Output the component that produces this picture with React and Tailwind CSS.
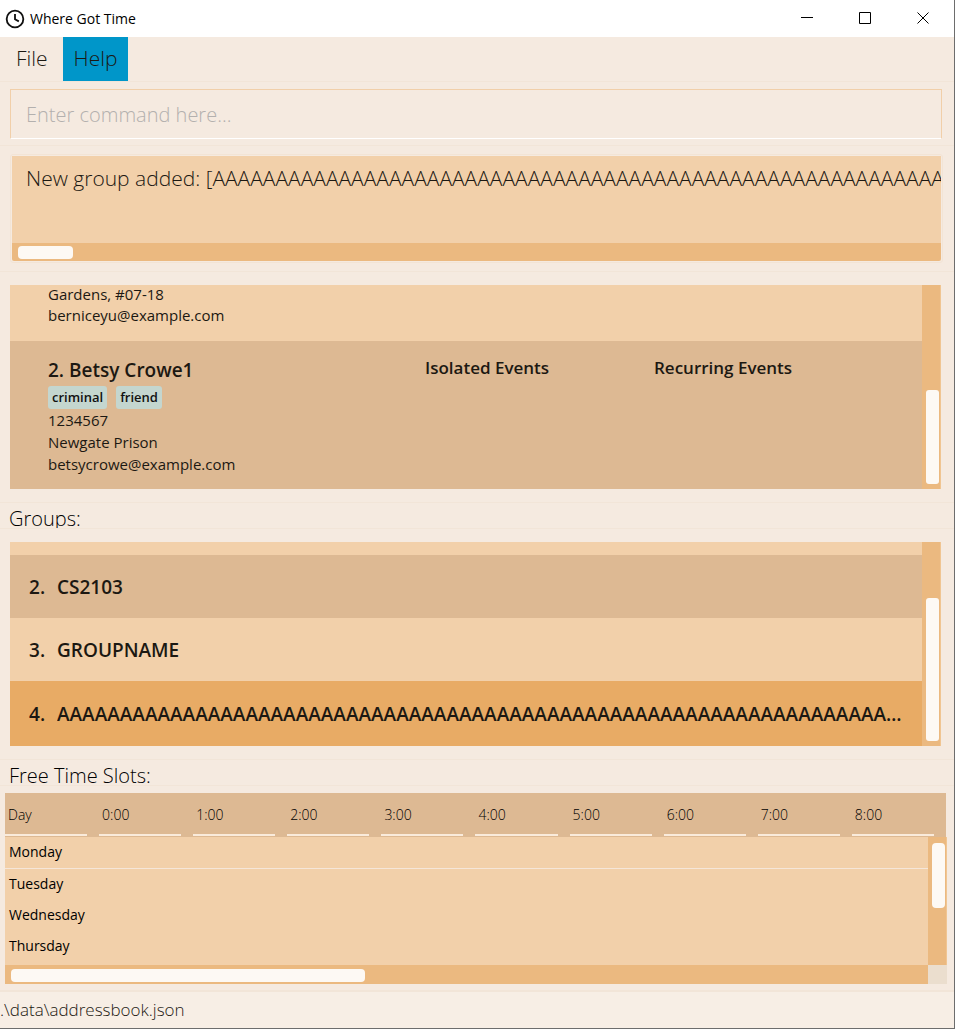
import React from "react";

const LONG_NAME = "A".repeat(80);
const HOURS = ["0:00", "1:00", "2:00", "3:00", "4:00", "5:00", "6:00", "7:00", "8:00"];
const DAYS = ["Monday", "Tuesday", "Wednesday", "Thursday"];

const GROUPS = [
  { id: 2, name: "CS2103", row: "h-[63px] bg-[#ddb993]" },
  { id: 3, name: "GROUPNAME", row: "h-[63px] bg-[#f2d0aa]" },
  { id: 4, name: LONG_NAME, row: "h-[65px] bg-[#e8ab65]" },
];

function TitleBar() {
  return (
    <header className="flex h-[37px] shrink-0 items-center bg-white pr-[2px] pl-[5px]">
      <svg className="size-5" viewBox="0 0 24 24" fill="none" stroke="#111" strokeWidth="2.2" aria-hidden="true">
        <circle cx="12" cy="12" r="10" />
        <path d="M12 6v6.3l4.6 2.6" />
      </svg>
      <h1 className="ml-[5px] grow text-sm text-black">Where Got Time</h1>
      <div className="flex h-full">
        <button aria-label="Minimize" className="flex w-[58px] items-center justify-center">
          <svg width="13" height="13" viewBox="0 0 13 13" stroke="#000" aria-hidden="true">
            <path d="M0 5.5h12" />
          </svg>
        </button>
        <button aria-label="Maximize" className="flex w-[58px] items-center justify-center">
          <svg width="13" height="13" viewBox="0 0 13 13" fill="none" stroke="#000" aria-hidden="true">
            <path d="M.5 .5h11v11H.5z" />
          </svg>
        </button>
        <button aria-label="Close" className="flex w-[58px] items-center justify-center">
          <svg width="13" height="13" viewBox="0 0 13 13" fill="none" stroke="#000" aria-hidden="true">
            <path d="M.5 .5l11 11M11.5 .5l-11 11" />
          </svg>
        </button>
      </div>
    </header>
  );
}

function SideScroll({ thumb }) {
  return (
    <div className="flex w-[19px] shrink-0 flex-col justify-end border-r border-[#f0c592] bg-[#ebb980] pt-1 pr-px pb-[5px] pl-1">
      <div className={"rounded-[3px] bg-[#fdf9f4] " + thumb} />
    </div>
  );
}

function Tag({ children }) {
  return (
    <span className="rounded-[3px] bg-[#c4d6cf] px-1 text-[13px] leading-[23px] font-semibold text-[#111]">
      {children}
    </span>
  );
}

function SectionLabel({ children }) {
  return (
    <h2 className="h-[26px] shrink-0 overflow-hidden border-b border-[#f2e5d8] pl-[9px] text-[20px] leading-8 font-light text-black">
      {children}
    </h2>
  );
}

export default function App() {
  return (
    <div className="flex min-h-screen flex-col border-r border-b border-[#6d6d6d] bg-[#f5eae0] font-['Open_Sans','Noto_Sans',sans-serif] text-[#1c1812]">
      <TitleBar />

      <nav className="flex h-11 shrink-0 text-[21px] leading-[42px] font-light">
        <button className="ml-[6px] flex px-[10px]">File</button>
        <button className="ml-[5px] flex bg-[#0096c9] px-[11px]">Help</button>
      </nav>

      <section className="border-y border-[#f2e5d8] pt-[7px] pr-3 pb-[6px] pl-[10px]">
        <input
          aria-label="Command"
          placeholder="Enter command here..."
          className="block h-[50px] w-full border border-b-white border-[#f1cfa9] bg-transparent px-[15px] text-[20px] font-light outline-none placeholder:text-[#b3b0ae]"
        />
      </section>

      <section className="border-b border-[#f2e5d8] pt-2 pr-[11px] pb-2 pl-[10px]">
        <div className="rounded-[3px] border border-[#f3e4d5] p-px">
          <textarea
            aria-label="Result"
            readOnly
            wrap="off"
            value={"New group added: [" + LONG_NAME}
            className="block h-[87px] w-full resize-none overflow-hidden bg-[#f2d0aa] px-[14px] pt-2 text-[21px] leading-7 font-light outline-none"
          />
          <div className="h-[18px] rounded-b-[2px] bg-[#ebb980] px-[6px] pt-[3px]">
            <div className="h-[13px] w-[55px] rounded-[4px] bg-[#fdf9f4]" />
          </div>
        </div>
      </section>

      <section className="flex grow border-b border-[#f2e5d8] pt-[13px] pr-[13px] pb-[13px] pl-[10px]">
        <div className="flex h-[204px] grow flex-col justify-end overflow-hidden bg-[#f2d0aa] text-[15px]">
          <article className="px-[38px] pb-[15px] leading-[21px]">
            <p>Gardens, #07-18</p>
            <p>berniceyu@example.com</p>
          </article>
          <article className="grid h-[148px] shrink-0 grid-cols-[377px_229px_1fr] bg-[#ddb993] pt-[15px] pl-[38px]">
            <div className="leading-[22px]">
              <h2 className="text-[19px] leading-7 font-semibold">2. Betsy Crowe1</h2>
              <div className="mt-[2px] flex gap-[9px]">
                <Tag>criminal</Tag>
                <Tag>friend</Tag>
              </div>
              <p>1234567</p>
              <p>Newgate Prison</p>
              <p>betsycrowe@example.com</p>
            </div>
            <h3 className="text-[17px] leading-6 font-semibold">Isolated Events</h3>
            <h3 className="text-[17px] leading-6 font-semibold">Recurring Events</h3>
          </article>
        </div>
        <SideScroll thumb="h-[94px]" />
      </section>

      <SectionLabel>Groups:</SectionLabel>

      <section className="flex border-b border-[#f2e5d8] pt-[13px] pr-[13px] pb-[13px] pl-[10px]">
        <ol className="flex h-[204px] min-w-0 grow flex-col justify-end overflow-hidden bg-[#f2d0aa] text-[19px] font-semibold">
          {GROUPS.map((g) => (
            <li key={g.id} className={"flex shrink-0 items-center pt-[2px] pr-4 pl-[19px] " + g.row}>
              <span className="w-7 shrink-0">{g.id}.</span>
              <span className="truncate">{g.name}</span>
            </li>
          ))}
        </ol>
        <SideScroll thumb="h-[143px]" />
      </section>

      <SectionLabel>Free Time Slots:</SectionLabel>

      <section className="border-b-2 border-[#f2e5d8] pt-[7px] pr-[7px] pb-[6px] pl-[5px]">
        <div className="relative">
          <div className="mr-px h-[172px] overflow-hidden bg-[#f2d0aa]">
            <table className="w-full table-fixed border-separate border-spacing-0 text-left text-sm">
              <thead className="bg-[#ddb993]">
                <tr>
                  {["Day", ...HOURS].map((h) => (
                    <th key={h} className="p-0 pb-px font-light text-black">
                      <div className="mr-3 h-[43px] border-b-2 border-[#faebdb] pl-[3px] leading-[43px]">{h}</div>
                    </th>
                  ))}
                </tr>
              </thead>
              <tbody>
                {DAYS.map((d, i) => (
                  <tr key={d} className={i === 0 ? "h-8 *:border-b *:border-[#f5e6d9]" : "h-[31px]"}>
                    <td className="p-0 pb-px pl-1 text-black">{d}</td>
                    {HOURS.map((h) => (
                      <td key={h} className="p-0" />
                    ))}
                  </tr>
                ))}
              </tbody>
            </table>
          </div>
          <div className="flex h-[19px] bg-[#ebdece]">
            <div className="mr-[19px] grow bg-[#ebb980] px-[6px] pt-1">
              <div className="h-[13px] w-[354px] rounded-[4px] bg-[#fdf9f4]" />
            </div>
          </div>
          <div className="absolute top-11 right-0 bottom-[19px] w-[19px] border-r border-[#f0c592] bg-[#ebb980] pt-[6px] pr-px pl-1">
            <div className="h-[65px] rounded-[4px] bg-[#fdf9f4]" />
          </div>
        </div>
      </section>

      <footer className="h-9 shrink-0 bg-[#f7eee5] text-[17px] leading-9 font-light">.\data\addressbook.json</footer>
    </div>
  );
}
